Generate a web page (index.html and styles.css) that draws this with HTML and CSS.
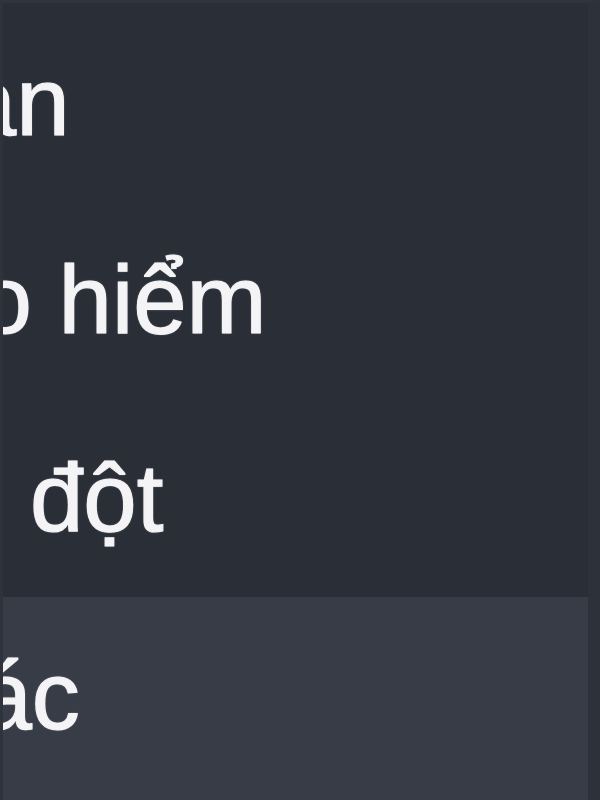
FILE: index.html
```html
<!DOCTYPE html>
<html lang="vi">
<head>
<meta charset="utf-8">
<title>Menu</title>
<link rel="stylesheet" href="styles.css">
</head>
<body>
<nav class="menu">
  <ul class="menu-list">
    <li class="menu-item"><span class="label label-1">Tai nạn</span></li>
    <li class="menu-item"><span class="label label-2">Bảo hiểm</span></li>
    <li class="menu-item"><span class="label label-3">Xung đột</span></li>
    <li class="menu-item is-hover"><span class="label label-4">Khác</span></li>
  </ul>
</nav>
</body>
</html>
```
FILE: styles.css
```css
html, body {
  margin: 0;
  padding: 0;
  background: #2a2e37;
}

.menu {
  width: 600px;
  height: 800px;
  box-sizing: border-box;
  overflow: hidden;
  background: #2a2e37;
  border-top: 3px solid #30343d;
  border-left: 3px solid #2f333c;
  border-right: 12px solid #2d313a;
  font-family: "Liberation Sans", Arial, sans-serif;
}

.menu-list {
  list-style: none;
  margin: 0;
  padding: 0;
  display: flex;
  flex-direction: column;
}

.menu-item {
  height: 198px;
  line-height: 198px;
  font-size: 96px;
  color: #f4f4f6;
  white-space: nowrap;
  overflow: hidden;
  -webkit-text-stroke: 1.2px #f4f4f6;
  text-shadow: 0 0 2px rgba(244, 244, 246, 0.6);
}

.menu-item.is-hover {
  background: #383c46;
  height: 203px;
  border-bottom: 10px solid #3c404a;
}

.label {
  display: inline-block;
}

.label-1 { margin-left: -243px; }
.label-2 { margin-left: -142px; }
.label-3 { margin-left: -224px; }
.label-4 { margin-left: -142px; }
```
